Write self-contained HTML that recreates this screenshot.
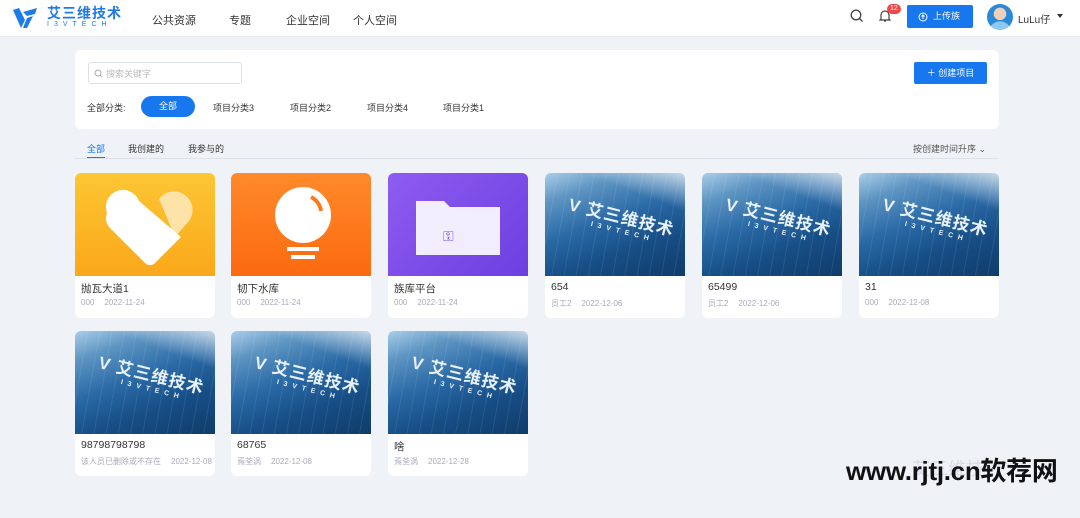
<!DOCTYPE html>
<html><head><meta charset="utf-8"><style>
*{margin:0;padding:0;box-sizing:border-box}
body{width:1080px;height:518px;overflow:hidden;background:#eff2f7;font-family:"Liberation Sans","Noto Sans CJK SC",sans-serif;position:relative;color:#333}
.hdr{position:absolute;left:0;top:0;width:1080px;height:37px;background:#fff;border-bottom:1px solid #e6e9ee}
.abs{position:absolute}
.nav{font-size:11px;color:#333;top:12px}
.panel{position:absolute;left:75px;top:50px;width:924px;height:79px;background:#fff;border-radius:6px}
.card{position:absolute;width:140px;height:145px;background:#fff;border-radius:6px;overflow:hidden}
.card .img{height:103px}
.card .t{position:absolute;left:6px;top:108px;font-size:10.5px;color:#333}
.card .m{position:absolute;left:6px;top:125px;font-size:8px;color:#aab}
.card .m span{margin-left:10px}
.bld{background:linear-gradient(160deg,#a9cde8 0%,#5d94c2 20%,#2a6aa6 45%,#174e86 70%,#103c6a 100%);position:relative}
.bld::after{content:"";position:absolute;inset:0;background:repeating-linear-gradient(100deg,rgba(255,255,255,.08) 0 1px,transparent 1px 12px),linear-gradient(200deg,rgba(255,255,255,.7) 0%,rgba(255,255,255,0) 25%)}
.bld .lg{position:absolute;left:22px;top:30px;color:#e8f0f8;font-size:17px;font-weight:bold;transform:rotate(14deg);z-index:1;letter-spacing:1px}
.bld .lg small{display:block;font-size:7px;letter-spacing:5px;margin-left:26px}
</style></head><body>
<div class="hdr">
 <svg class="abs" style="left:12px;top:6px" width="28" height="24" viewBox="0 0 28 24"><path d="M1 4l6-2 6 12-4 8z" fill="#1d7be8"/><path d="M11 6l14-4-2 6-8 2z" fill="#1d7be8"/><path d="M15 12l6-2-6 12-4 0z" fill="#1d7be8"/></svg>
 <div class="abs" style="left:47px;top:3px;font-size:14px;font-weight:bold;color:#1d7be8;letter-spacing:1px">艾三维技术</div>
 <div class="abs" style="left:47px;top:21px;font-size:7px;color:#1d7be8;letter-spacing:5px">I3VTECH</div>
 <div class="abs nav" style="left:152px">公共资源</div>
 <div class="abs nav" style="left:229px">专题</div>
 <div class="abs nav" style="left:286px">企业空间</div>
 <div class="abs nav" style="left:353px">个人空间</div>
 <svg class="abs" style="left:850px;top:9px" width="14" height="14" viewBox="0 0 14 14"><circle cx="6" cy="6" r="4.8" fill="none" stroke="#444" stroke-width="1.3"/><path d="M9.5 9.5l3 3" stroke="#444" stroke-width="1.3"/></svg>
 <svg class="abs" style="left:879px;top:9px" width="12" height="14" viewBox="0 0 12 14"><path d="M2 10V6a4 4 0 018 0v4l1 1H1zM5 12h2" fill="none" stroke="#444" stroke-width="1.2"/></svg>
 <div class="abs" style="left:887px;top:4px;background:#f04848;color:#fff;font-size:7px;border-radius:6px;padding:0 3px;line-height:10px">12</div>
 <div class="abs" style="left:907px;top:5px;width:66px;height:23px;background:#1677ee;border-radius:2px;color:#fff;font-size:9px;line-height:23px;padding-left:26px">上传族</div>
 <svg class="abs" style="left:918px;top:12px" width="10" height="10" viewBox="0 0 10 10"><circle cx="5" cy="5" r="4" fill="none" stroke="#fff"/><path d="M5 7V3M3.5 4.5L5 3l1.5 1.5" stroke="#fff" fill="none"/></svg>
 <div class="abs" style="left:987px;top:4px;width:26px;height:26px;border-radius:50%;background:radial-gradient(circle at 50% 38%,#f0d0b8 0 6px,transparent 6.5px),radial-gradient(circle at 50% 110%,#8ec7f0 0 11px,transparent 11.5px),#2a8ad8"></div>
 <div class="abs" style="left:1018px;top:11px;font-size:10px;color:#333">LuLu仔</div>
 <div class="abs" style="left:1057px;top:14px;border:3px solid transparent;border-top:4px solid #333"></div>
</div>
<div class="panel">
 <div class="abs" style="left:13px;top:12px;width:154px;height:22px;border:1px solid #dcdfe6;border-radius:3px"></div>
 <svg class="abs" style="left:19px;top:19px" width="9" height="9" viewBox="0 0 9 9"><circle cx="4" cy="4" r="3" fill="none" stroke="#aaa"/><path d="M6.2 6.2L8 8" stroke="#aaa"/></svg>
 <div class="abs" style="left:31px;top:17px;font-size:9px;color:#bbb">搜索关键字</div>
 <div class="abs" style="left:839px;top:12px;width:73px;height:22px;background:#1677ee;border-radius:2px;color:#fff;font-size:9px;line-height:22px;text-align:center">＋ 创建项目</div>
 <div class="abs" style="left:12px;top:51px;font-size:9px;color:#333">全部分类:</div>
 <div class="abs" style="left:66px;top:46px;width:54px;height:21px;background:#1677ee;border-radius:11px;color:#fff;font-size:9px;line-height:21px;text-align:center">全部</div>
 <div class="abs" style="left:138px;top:51px;font-size:9px">项目分类3</div>
 <div class="abs" style="left:215px;top:51px;font-size:9px">项目分类2</div>
 <div class="abs" style="left:292px;top:51px;font-size:9px">项目分类4</div>
 <div class="abs" style="left:368px;top:51px;font-size:9px">项目分类1</div>
</div>
<div class="abs" style="left:87px;top:142px;font-size:9px;color:#1677ee">全部</div>
<div class="abs" style="left:87px;top:157px;width:18px;height:2px;background:#1677ee"></div>
<div class="abs" style="left:128px;top:142px;font-size:9px">我创建的</div>
<div class="abs" style="left:188px;top:142px;font-size:9px">我参与的</div>
<div class="abs" style="left:75px;top:158px;width:924px;height:1px;background:#dde1e8"></div>
<div class="abs" style="left:913px;top:142px;font-size:9px;color:#555">按创建时间升序 ⌄</div>

<div class="card" style="left:75px;top:173px"><div class="img" style="background:linear-gradient(180deg,#fdc634,#f9a81a)"><svg width="140" height="103" viewBox="0 0 140 103"><path d="M84 26a17 17 0 0130 22l-14 16z" fill="#fde3a8"/><path d="M32 40a17 17 0 0132-12l42 36-26 26a7 7 0 01-10 0L36 56a14 14 0 01-4-16z" fill="#fff"/></svg></div><div class="t">抛瓦大道1</div><div class="m">000<span>2022-11-24</span></div></div>
<div class="card" style="left:231px;top:173px"><div class="img" style="background:linear-gradient(180deg,#ff8a2a,#fc6a10)"><svg width="140" height="103" viewBox="0 0 140 103"><circle cx="72" cy="42" r="28" fill="#fff"/><path d="M80 24a18 18 0 0110 14" stroke="#fc7a1a" stroke-width="4" fill="none"/><rect x="56" y="74" width="32" height="4" fill="#fff"/><rect x="60" y="82" width="24" height="4" fill="#fff"/></svg></div><div class="t">韧下水库</div><div class="m">000<span>2022-11-24</span></div></div>
<div class="card" style="left:388px;top:173px"><div class="img" style="background:linear-gradient(135deg,#8e5cf0,#6c3fe0)"><svg width="140" height="103" viewBox="0 0 140 103"><path d="M28 28h28l6 6h50v48H28z" fill="#fff" opacity=".9"/><text x="55" y="68" font-size="14" fill="#7a4ae8" font-family="Liberation Sans">⚿</text></svg></div><div class="t">族库平台</div><div class="m">000<span>2022-11-24</span></div></div>
<div class="card" style="left:545px;top:173px"><div class="img bld"><div class="lg">V 艾三维技术<small>I3VTECH</small></div></div><div class="t">654</div><div class="m">员工2<span>2022-12-06</span></div></div>
<div class="card" style="left:702px;top:173px"><div class="img bld"><div class="lg">V 艾三维技术<small>I3VTECH</small></div></div><div class="t">65499</div><div class="m">员工2<span>2022-12-06</span></div></div>
<div class="card" style="left:859px;top:173px"><div class="img bld"><div class="lg">V 艾三维技术<small>I3VTECH</small></div></div><div class="t">31</div><div class="m">000<span>2022-12-08</span></div></div>
<div class="card" style="left:75px;top:331px"><div class="img bld"><div class="lg">V 艾三维技术<small>I3VTECH</small></div></div><div class="t">98798798798</div><div class="m">该人员已删除或不存在<span>2022-12-08</span></div></div>
<div class="card" style="left:231px;top:331px"><div class="img bld"><div class="lg">V 艾三维技术<small>I3VTECH</small></div></div><div class="t">68765</div><div class="m">焉荃涡<span>2022-12-08</span></div></div>
<div class="card" style="left:388px;top:331px"><div class="img bld"><div class="lg">V 艾三维技术<small>I3VTECH</small></div></div><div class="t">啥</div><div class="m">焉荃涡<span>2022-12-28</span></div></div>

<div class="abs" style="left:912px;top:455px;font-size:18px;color:#ccd;opacity:.6">艾三维技</div>
<div class="abs" style="left:846px;top:451px;font-size:26px;font-weight:bold;color:#111;letter-spacing:-0.3px">www.rjtj.cn软荐网</div>
</body></html>
